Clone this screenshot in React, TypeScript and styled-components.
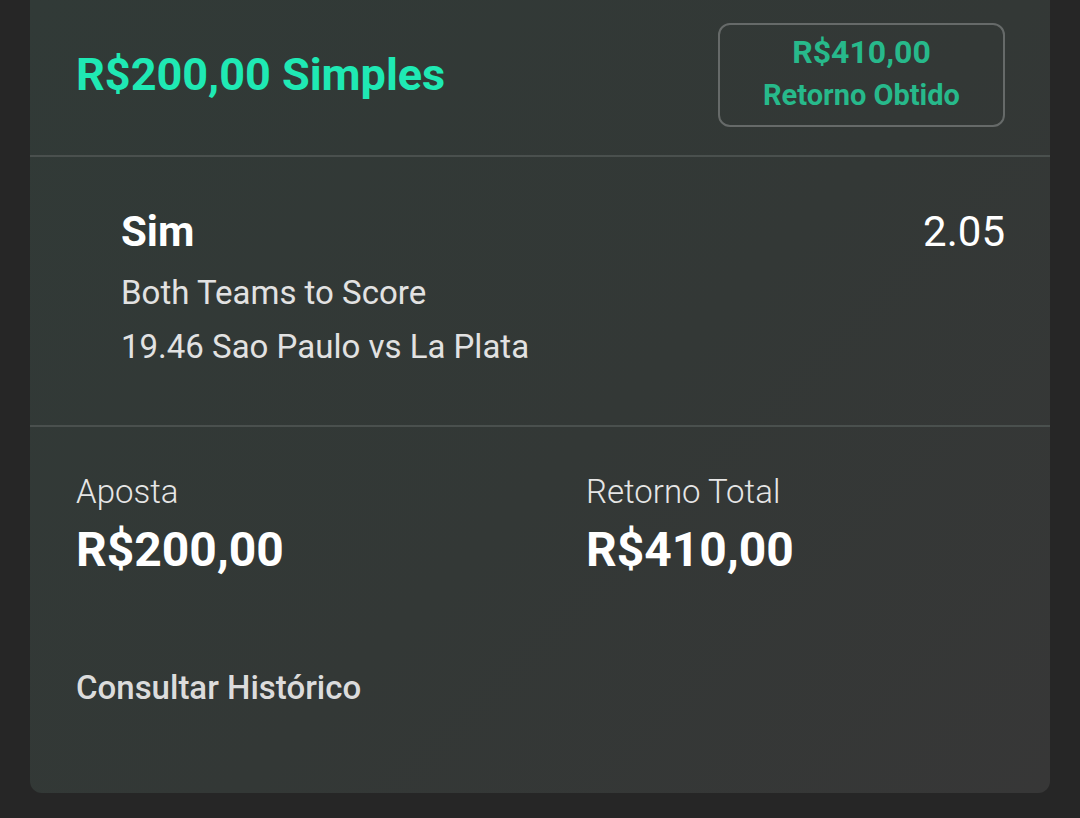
import React from 'react';
import styled, { createGlobalStyle } from 'styled-components';

const GlobalStyle = createGlobalStyle`
  html, body {
    margin: 0;
    padding: 0;
    background: #262626;
  }
  body {
    font-family: Roboto, "Liberation Sans", sans-serif;
  }
`;

interface Selection {
  name: string;
  odds: string;
  market: string;
  event: string;
}

const selection: Selection = {
  name: 'Sim',
  odds: '2.05',
  market: 'Both Teams to Score',
  event: '19.46 Sao Paulo vs La Plata',
};

const App = () => {
  return (
    <>
      <GlobalStyle />
      <Page>
        <Card>
          <Header>
            <Title>R$200,00 Simples</Title>
            <ReturnBadge>
              <BadgeAmount>R$410,00</BadgeAmount>
              <BadgeLabel>Retorno Obtido</BadgeLabel>
            </ReturnBadge>
          </Header>

          <SelectionBlock>
            <SelectionTop>
              <SelectionName>{selection.name}</SelectionName>
              <Odds>{selection.odds}</Odds>
            </SelectionTop>
            <Detail>{selection.market}</Detail>
            <Detail>{selection.event}</Detail>
          </SelectionBlock>

          <Summary>
            <Totals>
              <Total>
                <TotalLabel>Aposta</TotalLabel>
                <TotalValue>R$200,00</TotalValue>
              </Total>
              <Total>
                <TotalLabel>Retorno Total</TotalLabel>
                <TotalValue>R$410,00</TotalValue>
              </Total>
            </Totals>
            <HistoryLink>Consultar Histórico</HistoryLink>
          </Summary>
        </Card>
      </Page>
    </>
  );
};

export default App;

const Page = styled.div`
  min-height: 818px;
  box-sizing: border-box;
  padding: 0 30px 25px;
`;

const Card = styled.div`
  background: linear-gradient(135deg, #313a37 0%, #333836 55%, #373737 100%);
  border-radius: 0 0 12px 12px;
  height: 793px;
  display: flex;
  flex-direction: column;
`;

const Header = styled.div`
  height: 157px;
  box-sizing: border-box;
  display: flex;
  align-items: center;
  justify-content: space-between;
  padding: 0 45px 0 46px;
  border-bottom: 2px solid #4a504e;
`;

const Title = styled.h1`
  margin: -6px 0 0;
  font-size: 45px;
  font-weight: 700;
  color: #1fe9b4;
`;

const ReturnBadge = styled.div`
  width: 287px;
  height: 104px;
  box-sizing: border-box;
  border: 2px solid #666a69;
  border-radius: 12px;
  display: flex;
  flex-direction: column;
  align-items: center;
  justify-content: center;
  gap: 7px;
  padding-bottom: 4px;
  margin-top: -6px;
`;

const BadgeAmount = styled.div`
  font-size: 32px;
  font-weight: 700;
  color: #27b98b;
`;

const BadgeLabel = styled.div`
  font-size: 29px;
  font-weight: 700;
  color: #27b98b;
`;

const SelectionBlock = styled.div`
  height: 270px;
  box-sizing: border-box;
  padding: 50px 45px 0 91px;
  border-bottom: 2px solid #4a504e;
`;

const SelectionTop = styled.div`
  display: flex;
  justify-content: space-between;
  align-items: baseline;
  margin-bottom: 10px;
`;

const SelectionName = styled.div`
  font-size: 42px;
  font-weight: 700;
  color: #ffffff;
`;

const Odds = styled.div`
  font-size: 42px;
  font-weight: 400;
  color: #ffffff;
`;

const Detail = styled.div`
  font-size: 33px;
  color: #e2e2e2;
  line-height: 54px;
`;

const Summary = styled.div`
  flex: 1;
  padding: 45px 46px 0;
`;

const Totals = styled.div`
  display: grid;
  grid-template-columns: 510px 1fr;
`;

const Total = styled.div`
  display: flex;
  flex-direction: column;
  gap: 10px;
`;

const TotalLabel = styled.div`
  font-size: 33px;
  font-weight: 300;
  color: #e6e6e6;
`;

const TotalValue = styled.div`
  font-size: 48px;
  font-weight: 700;
  color: #ffffff;
`;

const HistoryLink = styled.div`
  margin-top: 90px;
  font-size: 33px;
  font-weight: 500;
  color: #dcdcdc;
`;
